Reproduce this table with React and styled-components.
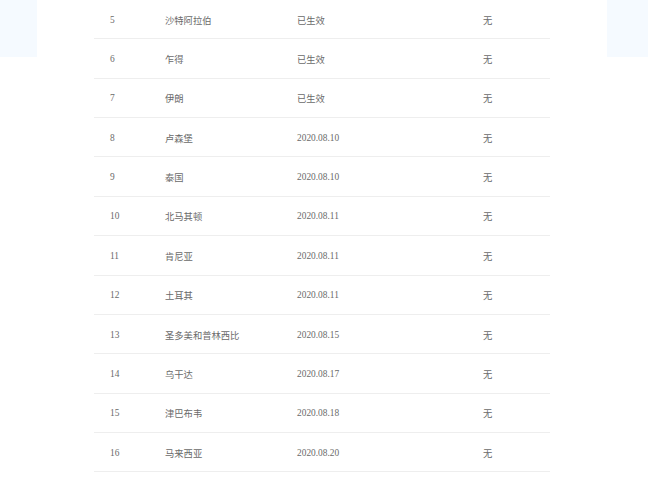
import React from "react";
import styled, { createGlobalStyle } from "styled-components";

const Global = createGlobalStyle`
  html, body { margin: 0; padding: 0; background: #fff; }
  body { font-family: "Liberation Serif", "Noto Sans CJK SC", serif; }
`;

const Page = styled.div`
  display: flex;
  align-items: flex-start;
  width: 650px;
`;

const Decor = styled.div`
  width: ${(p) => p.$w}px;
  height: 57px;
  background: #f5faff;
  flex: none;
`;

const Table = styled.div`
  width: 456px;
  margin: 0 ${(p) => p.$right}px 0 57px;
  flex: none;
`;

const Row = styled.div`
  display: grid;
  grid-template-columns: 55px 132px 186px 83px;
  height: 39.36px;
  box-sizing: border-box;
  border-bottom: 1px solid #eeeeee;
  align-items: center;
`;

const Cell = styled.div`
  padding-left: 16px;
  padding-top: 1px;
  font-size: ${(p) => (p.$cjk ? "9.3px" : "9.4px")};
  color: #6a6a6a;
  font-family: ${(p) =>
    p.$cjk ? '"Noto Sans CJK SC", sans-serif' : '"Liberation Serif", serif'};
  white-space: nowrap;
`;

const rows = [
  [5, "沙特阿拉伯", "已生效"],
  [6, "乍得", "已生效"],
  [7, "伊朗", "已生效"],
  [8, "卢森堡", "2020.08.10"],
  [9, "泰国", "2020.08.10"],
  [10, "北马其顿", "2020.08.11"],
  [11, "肯尼亚", "2020.08.11"],
  [12, "土耳其", "2020.08.11"],
  [13, "圣多美和普林西比", "2020.08.15"],
  [14, "乌干达", "2020.08.17"],
  [15, "津巴布韦", "2020.08.18"],
  [16, "马来西亚", "2020.08.20"],
];

export default function App() {
  return (
    <>
      <Global />
      <Page>
        <Decor $w={37} />
        <Table $right={57}>
          {rows.map(([n, c, d]) => (
            <Row key={n}>
              <Cell>{n}</Cell>
              <Cell $cjk>{c}</Cell>
              <Cell $cjk={!/^\d/.test(d)}>{d}</Cell>
              <Cell $cjk>无</Cell>
            </Row>
          ))}
        </Table>
        <Decor $w={41} />
      </Page>
    </>
  );
}
